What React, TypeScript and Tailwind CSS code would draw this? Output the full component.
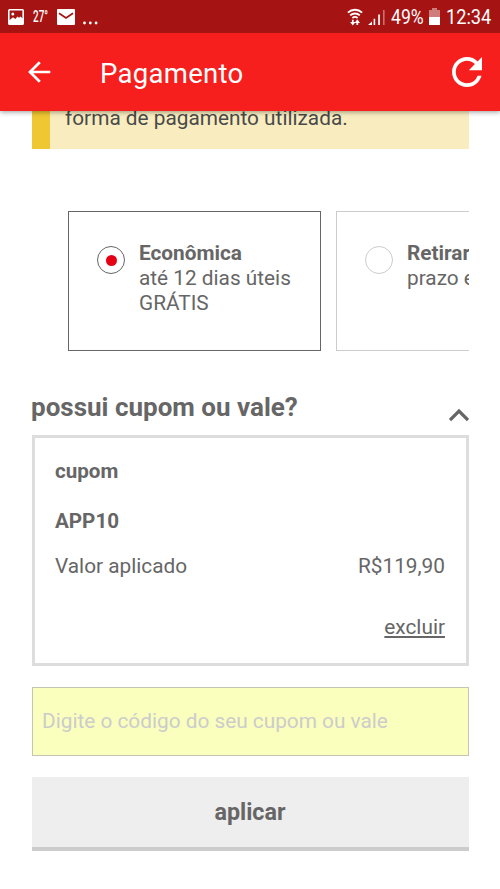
import { useState } from "react"

const shippingOptions = [
  { id: "economica", title: "Econômica", lines: ["até 12 dias úteis", "GRÁTIS"] },
  { id: "retirar", title: "Retirar", lines: ["prazo e"] },
]

function StatusBar() {
  return (
    <div className="flex h-[33px] items-center justify-between bg-[#a61313] pl-2 pr-[9px] text-white">
      <div className="flex items-center">
        <svg width="16" height="16" viewBox="0 0 16 16" fill="none">
          <rect x="0.8" y="0.8" width="14.4" height="14.4" rx="0.8" stroke="#fff" strokeWidth="1.6" />
          <path d="M1 11.5 5 8.2 7.4 10 9.5 7.6 11 8.8 12.4 7.4 15 9.8V15H1z" fill="#fff" />
          <circle cx="4.8" cy="5" r="1.5" fill="#fff" />
        </svg>
        <span className="ml-[9px] w-[15px] origin-left scale-x-[0.6] whitespace-nowrap text-[16.5px] leading-5 font-medium">27°</span>
        <svg className="ml-[9px]" width="18" height="16" viewBox="0 0 18 16">
          <rect width="18" height="16" rx="1" fill="#fff" />
          <path d="M2 4.2 9 9l7-4.8" fill="none" stroke="#a61313" strokeWidth="1.7" />
        </svg>
        <svg className="ml-2 mt-3" width="15" height="4" viewBox="0 0 15 4" fill="#fff">
          <circle cx="1.5" cy="2" r="1.4" />
          <circle cx="7.3" cy="2" r="1.4" />
          <circle cx="13.1" cy="2" r="1.4" />
        </svg>
      </div>
      <div className="flex items-center">
        <svg width="16" height="18" viewBox="0 0 16 18" fill="none" stroke="#fff" strokeWidth="1.8">
          <path d="M.9 4.6a10.3 10.3 0 0 1 14.2 0M3.2 7.4a7 7 0 0 1 9.6 0M5.4 10a3.9 3.9 0 0 1 5.2 0" />
          <path d="M5.8 11.8v3M10.3 17v-3" strokeWidth="1.7" />
          <path d="M3.1 14h5.4l-2.7 3.6zM7.6 14.9H13l-2.7-3.6z" fill="#fff" stroke="none" />
        </svg>
        <svg className="ml-[5px]" width="17" height="16" viewBox="0 0 17 16" fill="#fff">
          <path d="M0 16 4 12.5V16zM5.6 9.8h1.6V16H5.6zM10.2 5.4h1.7V16h-1.7z" />
          <path d="M15 1h1.6v15H15z" opacity="0.4" />
        </svg>
        <span className="ml-[6px] w-[33px] origin-left scale-x-[0.88] whitespace-nowrap pt-px text-[20px] leading-6">49%</span>
        <svg className="ml-[5px]" width="11" height="17" viewBox="0 0 11 17" fill="#fff">
          <path d="M3 0h5v2h3v7H0V2h3z" opacity="0.45" />
          <path d="M0 9h11v8H0z" />
        </svg>
        <span className="ml-[6px] w-[45px] origin-left scale-x-[0.91] whitespace-nowrap pt-px text-[20px] leading-6">12:34</span>
      </div>
    </div>
  )
}

export default function App() {
  const [shipping, setShipping] = useState("economica")
  const [open, setOpen] = useState(true)
  const [code, setCode] = useState("")

  return (
    <div className="flex h-[889px] w-[500px] flex-col overflow-hidden bg-white font-['Roboto',sans-serif] text-[20.8px] leading-[25px] text-[#666]">
      <header className="relative z-10 shrink-0 shadow-[0_1px_5px_rgba(0,0,0,0.4)]">
        <StatusBar />
        <div className="flex h-[78px] items-center bg-[#f71e1e] pl-7 pr-[18px] text-white">
          <button aria-label="Voltar">
            <svg width="23" height="22" viewBox="0 0 23 22" fill="none" stroke="#fff" strokeWidth="2.7">
              <path d="M22.3 11H2M11.8 1.2 2 11l9.8 9.8" />
            </svg>
          </button>
          <h1 className="ml-[49px] flex-1 pt-[4px] text-[27.5px] leading-8 tracking-[0.3px]">Pagamento</h1>
          <button aria-label="Recarregar">
            <svg width="30" height="30" viewBox="4 4 16 16" fill="#fff">
              <path d="M17.65 6.35A7.958 7.958 0 0 0 12 4c-4.42 0-7.99 3.58-7.99 8s3.57 8 7.99 8c3.73 0 6.84-2.55 7.73-6h-2.08A5.99 5.99 0 0 1 12 18c-3.31 0-6-2.69-6-6s2.69-6 6-6c1.66 0 3.14.69 4.22 1.78L13 11h7V4z" />
            </svg>
          </button>
        </div>
      </header>

      <main className="flex flex-col pl-8 pr-[31px]">
        <p className="-mt-[20px] h-[58px] shrink-0 border-l-[18px] border-[#efc732] bg-[#f9edc0] pl-[15px] pt-[15px] text-[#4a4a4a]">
          forma de pagamento utilizada.
        </p>

        <div className="mt-[62px] flex gap-[15px] overflow-hidden pl-9">
          {shippingOptions.map((option) => (
            <button
              key={option.id}
              onClick={() => setShipping(option.id)}
              className={`flex h-[140px] w-[253px] shrink-0 items-start border pl-7 pt-[29px] text-left ${
                shipping === option.id ? "border-[#666]" : "border-[#ccc]"
              }`}
            >
              <span
                className={`mt-[5px] flex size-7 shrink-0 items-center justify-center rounded-full border ${
                  shipping === option.id ? "border-[#666]" : "border-[#ccc]"
                }`}
              >
                {shipping === option.id && <span className="size-[11px] rounded-full bg-[#e60014]" />}
              </span>
              <span className="ml-[14px] flex flex-col whitespace-nowrap">
                <strong className="font-bold">{option.title}</strong>
                {option.lines.map((line) => (
                  <span key={line}>{line}</span>
                ))}
              </span>
            </button>
          ))}
        </div>

        <button onClick={() => setOpen(!open)} className="mt-10 flex h-11 items-start justify-between text-left">
          <h2 className="-ml-px text-[26px] leading-8 font-bold">possui cupom ou vale?</h2>
          <svg className="mt-[17px]" width="20" height="14" viewBox="0 0 20 14" fill="none" stroke="#666" strokeWidth="3.2">
            <path d="m1 12 9-9 9 9" />
          </svg>
        </button>

        {open && (
          <section className="flex h-[231px] flex-col border-[3px] border-[#ddd] pl-[20px] pr-[21px] pt-[21px]">
            <h3 className="text-[20.6px] font-bold">cupom</h3>
            <p className="mt-[25px] text-[20.6px] font-bold">APP10</p>
            <p className="mt-[20px] flex justify-between">
              <span>Valor aplicado</span>
              <span>R$119,90</span>
            </p>
            <a href="#" className="mt-[36px] self-end underline">excluir</a>
          </section>
        )}

        <input
          value={code}
          onChange={(e) => setCode(e.target.value)}
          placeholder="Digite o código do seu cupom ou vale"
          className="mt-[21px] h-[69px] border border-[#c5c5b5] bg-[#faffbd] px-[9px] pb-[2px] placeholder:text-[#ccc]"
        />
        <button className="mt-[21px] h-[74px] border-b-4 border-[#ccc] bg-[#eee] pr-px text-[23.3px] font-bold">aplicar</button>
      </main>
    </div>
  )
}
